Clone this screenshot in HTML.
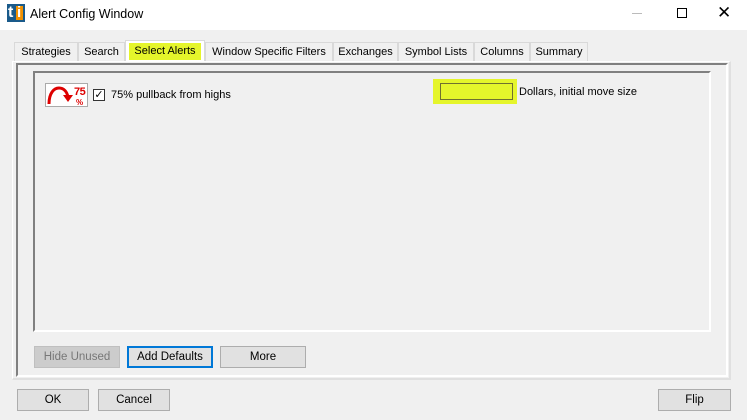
<!DOCTYPE html>
<html><head><meta charset="utf-8"><style>
*{box-sizing:border-box;margin:0;padding:0}
body{width:747px;height:420px;background:#f0f0f0;font-family:"Liberation Sans",Arial,sans-serif;font-size:12px;color:#000;position:relative;overflow:hidden}
.abs{position:absolute}
.title{left:0;top:0;width:747px;height:30px;background:#fff}
.tab{position:absolute;top:42px;height:20px;border:1px solid #d9d9d9;border-bottom:none;background:#f0f0f0;font-size:11px;line-height:19px;text-align:center}
.btn{position:absolute;height:22px;border:1px solid #adadad;background:#e1e1e1;font-size:11.5px;line-height:20px;text-align:center}
</style></head><body>
<div class="abs title"></div>
<div class="abs" style="left:7px;top:4px;width:18px;height:18px;background:#1a5a8a;"></div>
<div class="abs" style="left:8px;top:3px;color:#fff;font-weight:bold;font-size:16px;line-height:20px">t</div>
<div class="abs" style="left:16px;top:6px;width:7px;height:14px;background:#f29100"></div>
<div class="abs" style="left:17px;top:3px;color:#fff;font-weight:bold;font-size:15px;line-height:20px">i</div>
<div class="abs" style="left:30px;top:7px;font-size:12.5px">Alert Config Window</div>
<div class="abs" style="left:632px;top:13px;width:10px;height:1px;background:#bbb"></div>
<div class="abs" style="left:677px;top:8px;width:10px;height:10px;border:1px solid #000"></div>
<div class="abs" style="left:717px;top:0px;font-size:17px;line-height:26px;font-weight:300">✕</div>

<div class="tab" style="left:14px;width:64px">Strategies</div>
<div class="tab" style="left:78px;width:47px">Search</div>
<div class="tab" style="left:125px;width:80px;top:40px;height:22px;background:#fff;border-color:#d9d9d9"><span style="display:block;margin:2px 3px;background:#e5f52b;line-height:17px">Select Alerts</span></div>
<div class="tab" style="left:205px;width:128px">Window Specific Filters</div>
<div class="tab" style="left:333px;width:65px">Exchanges</div>
<div class="tab" style="left:398px;width:76px">Symbol Lists</div>
<div class="tab" style="left:474px;width:56px">Columns</div>
<div class="tab" style="left:530px;width:58px">Summary</div>

<div class="abs" style="left:12px;top:61px;width:719px;height:319px;border:1px solid #dcdcdc;border-top-color:#fff;border-left-color:#fff;border-right:2px solid #e0e0e0;border-bottom:2px solid #e0e0e0"></div>
<div class="abs" style="left:16px;top:63px;width:712px;height:314px;border-top:2px solid #808080;border-left:2px solid #808080;border-right:2px solid #fff;border-bottom:2px solid #fff"></div>
<div class="abs" style="left:33px;top:71px;width:678px;height:261px;border-top:2px solid #808080;border-left:2px solid #808080;border-right:2px solid #fff;border-bottom:2px solid #fff"></div>

<div class="abs" style="left:45px;top:83px;width:43px;height:24px;background:#fff;border:1px solid #aaa"></div>
<svg class="abs" style="left:46px;top:84px" width="42" height="22" viewBox="0 0 42 22">
<path d="M3 20 C3 9 8 4 13 4 C18 4 21 8 22 13" fill="none" stroke="#d00" stroke-width="3"/>
<path d="M17 11 L22 18 L27 11 Z" fill="#d00"/>
<text x="28" y="11" font-family="Liberation Sans" font-weight="bold" font-size="11" fill="#d00" letter-spacing="-0.5">75</text>
<text x="30" y="21" font-family="Liberation Sans" font-weight="bold" font-size="8" fill="#d00">%</text>
</svg>
<div class="abs" style="left:93px;top:89px;width:12px;height:12px;border:1px solid #333;background:#fff;font-size:11px;line-height:10px;text-align:center">✓</div>
<div class="abs" style="left:111px;top:88px;font-size:11px;line-height:14px">75% pullback from highs</div>

<div class="abs" style="left:433px;top:79px;width:84px;height:25px;background:#e5f52b"></div>
<div class="abs" style="left:440px;top:83px;width:73px;height:17px;border:1px solid #707030;background:#e5f52b"></div>
<div class="abs" style="left:519px;top:85px;font-size:11px;line-height:14px">Dollars, initial move size</div>

<div class="btn" style="left:34px;top:346px;width:86px;color:#777;background:#ccc;border-color:#bfbfbf">Hide Unused</div>
<div class="btn" style="left:127px;top:346px;width:86px;border:2px solid #0078d7;line-height:18px">Add Defaults</div>
<div class="btn" style="left:220px;top:346px;width:86px">More</div>
<div class="btn" style="left:17px;top:389px;width:72px">OK</div>
<div class="btn" style="left:98px;top:389px;width:72px">Cancel</div>
<div class="btn" style="left:658px;top:389px;width:73px">Flip</div>
</body></html>
